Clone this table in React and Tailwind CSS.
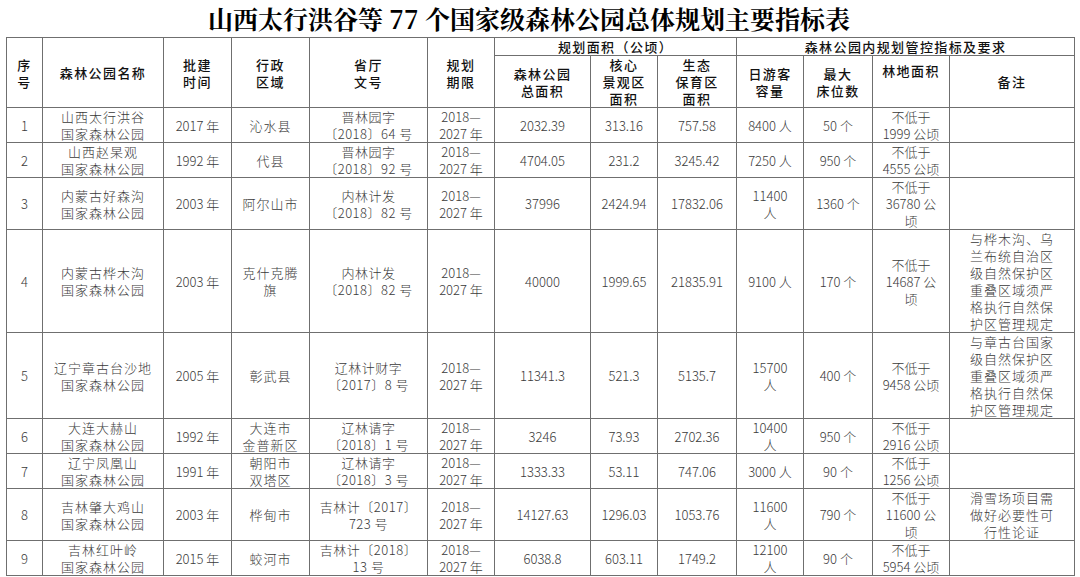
import React from "react";

const period = ["2018—", "2027 年"];

const rows = [
    { n: 1, h: 35, name: ["山西太行洪谷", "国家森林公园"], year: "2017 年", region: ["沁水县"], doc: ["晋林园字", "〔2018〕64 号"], total: "2032.39", core: "313.16", eco: "757.58", visitors: ["8400 人"], beds: "50 个", forest: ["不低于", "1999 公顷"], note: [] },
    { n: 2, h: 35, name: ["山西赵杲观", "国家森林公园"], year: "1992 年", region: ["代县"], doc: ["晋林园字", "〔2018〕92 号"], total: "4704.05", core: "231.2", eco: "3245.42", visitors: ["7250 人"], beds: "950 个", forest: ["不低于", "4555 公顷"], note: [] },
    { n: 3, h: 52, name: ["内蒙古好森沟", "国家森林公园"], year: "2003 年", region: ["阿尔山市"], doc: ["内林计发", "〔2018〕82 号"], total: "37996", core: "2424.94", eco: "17832.06", visitors: ["11400", "人"], beds: "1360 个", forest: ["不低于", "36780 公", "顷"], note: [] },
    { n: 4, h: 103, name: ["内蒙古桦木沟", "国家森林公园"], year: "2003 年", region: ["克什克腾", "旗"], doc: ["内林计发", "〔2018〕82 号"], total: "40000", core: "1999.65", eco: "21835.91", visitors: ["9100 人"], beds: "170 个", forest: ["不低于", "14687 公", "顷"], note: ["与桦木沟、乌", "兰布统自治区", "级自然保护区", "重叠区域须严", "格执行自然保", "护区管理规定"] },
    { n: 5, h: 86, name: ["辽宁章古台沙地", "国家森林公园"], year: "2005 年", region: ["彰武县"], doc: ["辽林计财字", "〔2017〕8 号"], total: "11341.3", core: "521.3", eco: "5135.7", visitors: ["15700", "人"], beds: "400 个", forest: ["不低于", "9458 公顷"], note: ["与章古台国家", "级自然保护区", "重叠区域须严", "格执行自然保", "护区管理规定"] },
    { n: 6, h: 34, name: ["大连大赫山", "国家森林公园"], year: "1992 年", region: ["大连市", "金普新区"], doc: ["辽林请字", "〔2018〕1 号"], total: "3246", core: "73.93", eco: "2702.36", visitors: ["10400", "人"], beds: "950 个", forest: ["不低于", "2916 公顷"], note: [] },
    { n: 7, h: 35, name: ["辽宁凤凰山", "国家森林公园"], year: "1991 年", region: ["朝阳市", "双塔区"], doc: ["辽林请字", "〔2018〕3 号"], total: "1333.33", core: "53.11", eco: "747.06", visitors: ["3000 人"], beds: "90 个", forest: ["不低于", "1256 公顷"], note: [] },
    { n: 8, h: 52, name: ["吉林肇大鸡山", "国家森林公园"], year: "2003 年", region: ["桦甸市"], doc: ["吉林计〔2017〕", "723 号"], total: "14127.63", core: "1296.03", eco: "1053.76", visitors: ["11600", "人"], beds: "790 个", forest: ["不低于", "11600 公", "顷"], note: ["滑雪场项目需", "做好必要性可", "行性论证"] },
    { n: 9, h: 34, name: ["吉林红叶岭", "国家森林公园"], year: "2015 年", region: ["蛟河市"], doc: ["吉林计〔2018〕", "13 号"], total: "6038.8", core: "603.11", eco: "1749.2", visitors: ["12100", "人"], beds: "90 个", forest: ["不低于", "5954 公顷"], note: [] },
];

const widths = [36, 121, 68, 78, 118, 67, 96, 67, 79, 67, 69, 77, 125];

// stacked lines inside a cell
const Lines = ({ items }) =>
    items.map((t, i) => (
        <React.Fragment key={i}>
            {i > 0 && <br />}
            {t}
        </React.Fragment>
    ));

const th = "border border-[#6f6f6f] p-0 text-center align-middle font-medium text-[13px] leading-[17px] tracking-[1.4px] text-[#111]";
const td = "border border-[#6f6f6f] p-0 text-center align-middle text-[13px] leading-[17px] text-[#3a3a3a] font-light";
const cjk = "tracking-[1px]";

const App = () => {
    return (
        <div className="w-[1080px] h-[577px] bg-white overflow-hidden" style={{ fontFamily: '"Noto Sans CJK SC", "Noto Sans", sans-serif' }}>
            {/* Title */}
            <div
                className="h-[37px] flex items-center justify-center pr-[22px] text-[25px] font-bold text-black leading-none"
                style={{ fontFamily: '"Noto Serif CJK SC", "Liberation Serif", "Noto Sans CJK SC", serif' }}
            >
                山西太行洪谷等 77 个国家级森林公园总体规划主要指标表
            </div>

            <table className="ml-[6px] w-[1069px] table-fixed border-collapse">
                <colgroup>
                    {widths.map((w, i) => (
                        <col key={i} style={{ width: w }} />
                    ))}
                </colgroup>
                <thead>
                    <tr className="h-[18px]">
                        <th rowSpan={2} className={th}>序<br />号</th>
                        <th rowSpan={2} className={th}>森林公园名称</th>
                        <th rowSpan={2} className={th}>批建<br />时间</th>
                        <th rowSpan={2} className={th}>行政<br />区域</th>
                        <th rowSpan={2} className={th}>省厅<br />文号</th>
                        <th rowSpan={2} className={th}>规划<br />期限</th>
                        <th colSpan={3} className={th}>规划面积（公顷）</th>
                        <th colSpan={4} className={th}>森林公园内规划管控指标及要求</th>
                    </tr>
                    <tr className="h-[52px]">
                        <th className={th}>森林公园<br />总面积</th>
                        <th className={th}>核心<br />景观区<br />面积</th>
                        <th className={th}>生态<br />保育区<br />面积</th>
                        <th className={th}>日游客<br />容量</th>
                        <th className={th}>最大<br />床位数</th>
                        <th className={`${th} !align-top pt-[6px]`}>林地面积</th>
                        <th className={th}>备注</th>
                    </tr>
                </thead>
                <tbody>
                    {rows.map((r) => (
                        <tr key={r.n} style={{ height: r.h }}>
                            <td className={td}>{r.n}</td>
                            <td className={`${td} ${cjk}`}><Lines items={r.name} /></td>
                            <td className={td}>{r.year}</td>
                            <td className={`${td} ${cjk}`}><Lines items={r.region} /></td>
                            <td className={`${td} tracking-[0.5px]`}><Lines items={r.doc} /></td>
                            <td className={td}><Lines items={period} /></td>
                            <td className={td}>{r.total}</td>
                            <td className={td}>{r.core}</td>
                            <td className={td}>{r.eco}</td>
                            <td className={td}><Lines items={r.visitors} /></td>
                            <td className={td}>{r.beds}</td>
                            <td className={td}><Lines items={r.forest} /></td>
                            <td className={`${td} ${cjk}`}><Lines items={r.note} /></td>
                        </tr>
                    ))}
                </tbody>
            </table>
        </div>
    );
};

export default App;
